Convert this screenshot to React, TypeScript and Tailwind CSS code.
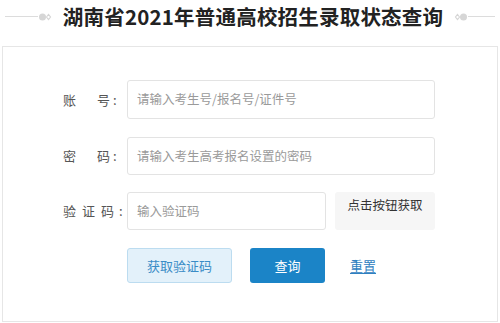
import React from "react";

function Deco({ flip }: { flip?: boolean }) {
  return (
    <svg width="14" height="10" viewBox="0 0 14 10" className={flip ? "-scale-x-100" : ""}>
      <circle cx="4.5" cy="5" r="3.5" fill="#d6d6d6" />
      <path d="M8.5 5 L10.5 2.5 L12.5 5 L10.5 7.5 Z" fill="none" stroke="#d6d6d6" strokeWidth="1.2" />
    </svg>
  );
}

export default function App() {
  const font = { fontFamily: '"Noto Sans CJK SC", "Noto Sans", sans-serif' };
  return (
    <div className="w-[500px] h-[323px] bg-white overflow-hidden" style={font}>
      <div className="h-[33px] flex items-center justify-center">
        <div className="w-[33px] h-px bg-[#dcdcdc]" />
        <Deco />
        <h1 className="mx-[11px] text-[20.5px] font-bold text-[#222] leading-none tracking-[0.2px]">
          湖南省2021年普通高校招生录取状态查询
        </h1>
        <Deco flip />
        <div className="w-[27px] h-px bg-[#dcdcdc]" />
      </div>
      <div className="mt-[13px] mx-[2px] h-[276px] border border-[#e6e6e6] pt-[33px] pl-[60px]">
        <div className="flex items-center h-[39px]">
          <div className="w-[64px] flex items-center text-[13px] text-[#555]">
            <span>账</span>
            <span className="ml-[21px]">号</span>
            <span className="ml-[3px]">:</span>
          </div>
          <div className="w-[308px] h-[39px] border border-[#e3e3e3] rounded-[3px] flex items-center pl-[9px] text-[12.5px] text-[#9a9a9a]">
            请输入考生号/报名号/证件号
          </div>
        </div>
        <div className="flex items-center h-[38px] mt-[18px]">
          <div className="w-[64px] flex items-center text-[13px] text-[#555]">
            <span>密</span>
            <span className="ml-[21px]">码</span>
            <span className="ml-[3px]">:</span>
          </div>
          <div className="w-[308px] h-[38px] border border-[#e3e3e3] rounded-[3px] flex items-center pl-[9px] text-[12.5px] text-[#9a9a9a]">
            请输入考生高考报名设置的密码
          </div>
        </div>
        <div className="flex items-center h-[38px] mt-[17px]">
          <div className="w-[64px] flex items-center text-[13px] text-[#555]">
            <span>验</span>
            <span className="ml-[6px]">证</span>
            <span className="ml-[6px]">码</span>
            <span className="ml-[5px]">:</span>
          </div>
          <div className="w-[199px] h-[38px] border border-[#e3e3e3] rounded-[3px] flex items-center pl-[9px] text-[12.5px] text-[#9a9a9a]">
            输入验证码
          </div>
          <div className="ml-[9px] w-[100px] h-[38px] bg-[#f6f6f6] rounded-[3px] flex justify-center pt-[4px] text-[12.5px] text-[#333]">
            点击按钮获取
          </div>
        </div>
        <div className="flex items-center h-[35px] mt-[18px] pl-[64px]">
          <button className="w-[105px] h-[35px] bg-[#e3f1fa] border border-[#bcdcf0] rounded-[3px] text-[13px] text-[#3a8cc6]">
            获取验证码
          </button>
          <button className="ml-[18px] w-[75px] h-[35px] bg-[#1b84c7] rounded-[3px] text-[13px] text-white">
            查询
          </button>
          <span className="ml-[25px] text-[13px] text-[#2f80c0] underline underline-offset-2">重置</span>
        </div>
      </div>
    </div>
  );
}
